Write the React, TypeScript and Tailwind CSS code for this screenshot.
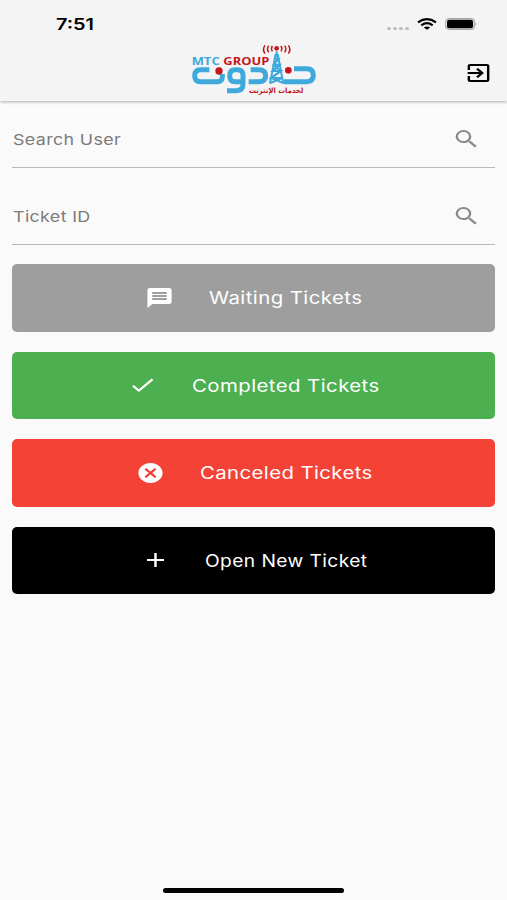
import type { ReactNode } from 'react'
import { MdAdd, MdCancel, MdCheck, MdExitToApp, MdMessage, MdSearch } from 'react-icons/md'

interface Action {
  id: number
  name: string
  color: string
  width: string
  stretch: string
  icon: ReactNode
}

const iconClass = 'w-[29px] h-6 shrink-0'

const actions: Action[] = [
  {
    id: 1,
    name: 'Waiting Tickets',
    color: 'bg-[#9e9e9e]',
    width: 'w-[153px]',
    stretch: 'scale-x-120',
    icon: <MdMessage className={iconClass} preserveAspectRatio="none" />,
  },
  {
    id: 2,
    name: 'Completed Tickets',
    color: 'bg-[#4caf50]',
    width: 'w-[188px]',
    stretch: 'scale-x-120',
    icon: <MdCheck className={iconClass} preserveAspectRatio="none" />,
  },
  {
    id: 3,
    name: 'Canceled Tickets',
    color: 'bg-[#f44336]',
    width: 'w-[172px]',
    stretch: 'scale-x-[1.195]',
    icon: <MdCancel className={iconClass} preserveAspectRatio="none" />,
  },
  {
    id: 4,
    name: 'Open New Ticket',
    color: 'bg-black',
    width: 'w-[162px]',
    stretch: 'scale-x-[1.13]',
    icon: <MdAdd className={iconClass} preserveAspectRatio="none" />,
  },
]

const fields = ['Search User', 'Ticket ID']

const Logo = () => (
  <svg className="h-[70px] w-[145px]" viewBox="0 0 435 210">
    {/* wordmark */}
    <g fill="none" stroke="#3fa9dc" strokeWidth="15" strokeLinejoin="round">
      <path d="M88 101H62Q44 101 44 119Q44 137 62 137H112Q127 137 127 122V114" />
      <path d="M189 137H165Q149 137 149 119Q149 101 165 101H172Q189 101 189 118V145Q189 164 170 164H141" />
      <path d="M212 101H236Q257 101 257 119Q257 137 236 137H206" />
      <path d="M342 98H380Q400 98 400 117Q400 137 380 137H312" />
    </g>
    <g fill="#c4161c">
      <circle cx="117" cy="105" r="11" />
      <circle cx="325" cy="103" r="10" />
      <circle cx="290" cy="37" r="7" />
    </g>
    {/* tower */}
    <g fill="none" stroke="#3fa9dc" strokeWidth="6">
      <path d="M287 54L270 143M293 54L310 143M290 46V64" />
      <path d="M284 68H296L281 86H299L278 105H302L274 126H306L271 141" />
      <path d="M296 68L281 86M299 86L278 105M302 105L274 126M281 86L302 105L274 126L310 141" />
    </g>
    <g fill="none" stroke="#c4161c" strokeWidth="4.5">
      <path d="M277 30Q272 38 277 46M266 29Q259 39 266 49M255 28Q246 40 255 53" />
      <path d="M303 30Q308 38 303 46M314 29Q321 39 314 49M325 28Q334 40 325 53" />
    </g>
    <g fontFamily="'Open Sans', sans-serif" fontWeight="700" fontSize="31">
      <text x="35" y="87" fill="#3fa9dc" textLength="84" lengthAdjust="spacingAndGlyphs">MTC</text>
      <text x="130" y="87" fill="#c4161c" textLength="138" lengthAdjust="spacingAndGlyphs">GROUP</text>
    </g>
    <text x="370" y="170" direction="rtl" fill="#c4161c" fontFamily="'DejaVu Sans', sans-serif" fontWeight="700" fontSize="22" textLength="163" lengthAdjust="spacingAndGlyphs">لخدمات الإنترنت</text>
  </svg>
)

const StatusBar = () => (
  <div className="flex h-12 items-center justify-between pr-[30px] pl-14">
    <svg className="h-6 w-12" viewBox="0 0 48 24">
      <text x="0" y="18" fontSize="16" fontWeight="600" textLength="38" lengthAdjust="spacingAndGlyphs">7:51</text>
    </svg>
    <div className="flex items-center">
      <div className="mt-2 mr-2 flex gap-0.5">
        <i className="h-[3px] w-1 rounded-full bg-[#bdbdbd]" />
        <i className="h-[3px] w-1 rounded-full bg-[#bdbdbd]" />
        <i className="h-[3px] w-1 rounded-full bg-[#bdbdbd]" />
        <i className="h-[3px] w-1 rounded-full bg-[#bdbdbd]" />
      </div>
      <svg className="mr-2 h-3 w-5" viewBox="0 0 20 12" fill="none" stroke="#000" strokeWidth="2.2">
        <path d="M1 4.4Q10 -2 19 4.4M4.3 7.3Q10 3 15.7 7.3" />
        <path d="M10 11.8L6.8 9.5Q10 7.3 13.2 9.5Z" fill="#000" stroke="none" />
      </svg>
      <svg className="h-3 w-8" viewBox="0 0 32 12">
        <rect x=".7" y=".7" width="28.6" height="10.6" rx="3" fill="none" stroke="#a9a9a9" strokeWidth="1.2" />
        <rect x="2" y="1.7" width="26" height="8.6" rx="2" />
        <path d="M30.3 4Q32.5 6 30.3 8Z" fill="#a9a9a9" />
      </svg>
    </div>
  </div>
)

const App = () => {
  return (
    <div className="flex h-[900px] w-[507px] flex-col bg-[#fafafa] font-[Inter,sans-serif] text-black">
      <header className="h-[101px] shrink-0 bg-[#f4f4f4] shadow-[0_1px_3px_rgba(0,0,0,0.3)]">
        <StatusBar />
        {/* APP BAR */}
        <div className="-mt-3 flex h-[70px] items-center justify-between pr-[14px] pl-[180px]">
          <Logo />
          <button className="mt-1">
            <MdExitToApp className={iconClass} preserveAspectRatio="none" />
          </button>
        </div>
      </header>

      <main className="flex flex-col px-3 pt-[9px]">
        {/* SEARCH FIELDS */}
        <div className="flex flex-col gap-[19px]">
          {fields.map((field) => (
            <label key={field} className="flex h-[58px] items-center justify-between border-b border-[#b8b8b8] pr-[14px] pl-px text-[#7b7b7b]">
              <span className="origin-left scale-x-[1.19] pt-[3px] text-[15px] tracking-[0.3px]">{field}</span>
              <MdSearch className="h-6 w-[29px] text-[#8a8a8a]" preserveAspectRatio="none" />
            </label>
          ))}
        </div>

        {/* ACTIONS */}
        <div className="mt-[19px] flex flex-col gap-5">
          {actions.map((action) => (
            <button key={action.id} className={`flex h-[67.5px] items-center justify-center gap-[35px] rounded-[5px] text-white ${action.color}`}>
              {action.icon}
              <span className={`flex pt-0.5 ${action.width}`}>
                <span className={`origin-left text-[17px] tracking-[0.35px] whitespace-nowrap ${action.stretch}`}>{action.name}</span>
              </span>
            </button>
          ))}
        </div>
      </main>

      {/* HOME INDICATOR */}
      <div className="mt-auto mb-[7px] h-[5px] w-[181px] self-center rounded-full bg-black" />
    </div>
  )
}

export default App
